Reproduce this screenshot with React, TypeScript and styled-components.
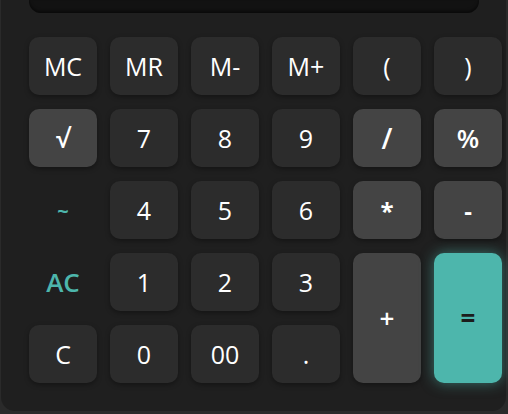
import React from "react";
import styled, { createGlobalStyle, css } from "styled-components";

const Global = createGlobalStyle`
  html, body { margin: 0; padding: 0; background: #2a2a2a; }
  body { font-family: "Open Sans", "Noto Sans", sans-serif; overflow: hidden; }
`;

const Body = styled.div`
  margin-left: 1px;
  width: 505px;
  box-sizing: border-box;
  background: #1f1f1f;
  border-radius: 0 0 14px 14px;
  padding: 0 4px 28px 28px;
`;

const Display = styled.div`
  width: 450px;
  height: 13px;
  background: #121212;
  border-radius: 0 0 12px 12px;
  box-shadow: inset 0 -2px 3px rgba(0, 0, 0, 0.5);
`;

const Keys = styled.div`
  margin-top: 24px;
  display: grid;
  grid-template-columns: repeat(6, 68px);
  grid-auto-rows: 58px;
  column-gap: 13px;
  row-gap: 14px;
`;

type Kind = "num" | "op" | "ghost" | "eq";

const Key = styled.button<{ $kind: Kind; $tall?: boolean; $size?: number; $weight?: number }>`
  border: none;
  border-radius: 10px;
  font-family: "Open Sans", "Noto Sans", sans-serif;
  font-size: ${(p) => p.$size ?? 25}px;
  font-weight: ${(p) => p.$weight ?? 400};
  color: #ffffff;
  display: flex;
  align-items: center;
  justify-content: center;
  padding: 0;
  background: #2c2c2c;
  box-shadow: 0 2px 5px rgba(0, 0, 0, 0.35);
  ${(p) => p.$tall && css`grid-row: span 2;`}
  ${(p) =>
    p.$kind === "op" &&
    css`
      background: #444444;
    `}
  ${(p) =>
    p.$kind === "ghost" &&
    css`
      background: transparent;
      box-shadow: none;
      color: #4db6ac;
    `}
  ${(p) =>
    p.$kind === "eq" &&
    css`
      background: #4db6ac;
      color: #1c1c1c;
      box-shadow: 0 0 14px rgba(77, 182, 172, 0.55);
    `}
`;

type K = { label: string; kind: Kind; tall?: boolean; size?: number; weight?: number };

const keys: K[] = [
  { label: "MC", kind: "num" },
  { label: "MR", kind: "num" },
  { label: "M-", kind: "num" },
  { label: "M+", kind: "num" },
  { label: "(", kind: "num" },
  { label: ")", kind: "num" },
  { label: "√", kind: "op", weight: 600, size: 26 },
  { label: "7", kind: "num" },
  { label: "8", kind: "num" },
  { label: "9", kind: "num" },
  { label: "/", kind: "op", weight: 600, size: 28 },
  { label: "%", kind: "op", weight: 600, size: 26 },
  { label: "~", kind: "ghost", weight: 700, size: 20 },
  { label: "4", kind: "num" },
  { label: "5", kind: "num" },
  { label: "6", kind: "num" },
  { label: "*", kind: "op", weight: 700, size: 24 },
  { label: "-", kind: "op", weight: 700, size: 24 },
  { label: "AC", kind: "ghost", weight: 600, size: 26 },
  { label: "1", kind: "num" },
  { label: "2", kind: "num" },
  { label: "3", kind: "num" },
  { label: "+", kind: "op", tall: true, weight: 600, size: 26 },
  { label: "=", kind: "eq", tall: true, weight: 700, size: 26 },
  { label: "C", kind: "num" },
  { label: "0", kind: "num" },
  { label: "00", kind: "num" },
  { label: ".", kind: "num" },
];

export default function App() {
  return (
    <>
      <Global />
      <Body>
        <Display />
        <Keys>
          {keys.map((k) => (
            <Key key={k.label} $kind={k.kind} $tall={k.tall} $size={k.size} $weight={k.weight}>
              {k.label}
            </Key>
          ))}
        </Keys>
      </Body>
    </>
  );
}
